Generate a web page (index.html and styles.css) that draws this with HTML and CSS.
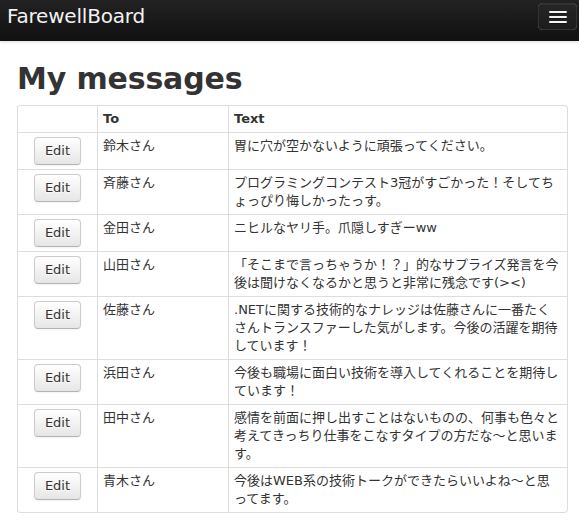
FILE: index.html
```html
<!DOCTYPE html>
<html lang="ja">
<head>
    <meta charset="UTF-8">
    <meta name="viewport" content="width=device-width, initial-scale=1.0">
    <title>FarewellBoard</title>
    <link rel="stylesheet" href="styles.css">
</head>
<body>

<div class="navbar">
    <a class="brand" href="#">FarewellBoard</a>
    <button class="btn-navbar" type="button">
        <span class="icon-bar"></span>
        <span class="icon-bar"></span>
        <span class="icon-bar"></span>
    </button>
</div>

<div class="container">
    <h1>My messages</h1>

    <table class="messages">
        <colgroup>
            <col class="col-edit">
            <col class="col-to">
            <col class="col-text">
        </colgroup>
        <thead>
            <tr>
                <th></th>
                <th>To</th>
                <th>Text</th>
            </tr>
        </thead>
        <tbody>
            <tr>
                <td class="edit"><a class="btn" href="#">Edit</a></td>
                <td>鈴木さん</td>
                <td>胃に穴が空かないように頑張ってください。</td>
            </tr>
            <tr>
                <td class="edit"><a class="btn" href="#">Edit</a></td>
                <td>斉藤さん</td>
                <td>プログラミングコンテスト3冠がすごかった！そしてちょっぴり悔しかったっす。</td>
            </tr>
            <tr>
                <td class="edit"><a class="btn" href="#">Edit</a></td>
                <td>金田さん</td>
                <td>ニヒルなヤリ手。爪隠しすぎーww</td>
            </tr>
            <tr>
                <td class="edit"><a class="btn" href="#">Edit</a></td>
                <td>山田さん</td>
                <td>「そこまで言っちゃうか！？」的なサプライズ発言を今後は聞けなくなるかと思うと非常に残念です(&gt;&lt;)</td>
            </tr>
            <tr>
                <td class="edit"><a class="btn" href="#">Edit</a></td>
                <td>佐藤さん</td>
                <td>.NETに関する技術的なナレッジは佐藤さんに一番たくさんトランスファーした気がします。今後の活躍を期待しています！</td>
            </tr>
            <tr>
                <td class="edit"><a class="btn" href="#">Edit</a></td>
                <td>浜田さん</td>
                <td>今後も職場に面白い技術を導入してくれることを期待しています！</td>
            </tr>
            <tr>
                <td class="edit"><a class="btn" href="#">Edit</a></td>
                <td>田中さん</td>
                <td>感情を前面に押し出すことはないものの、何事も色々と考えてきっちり仕事をこなすタイプの方だな〜と思います。</td>
            </tr>
            <tr>
                <td class="edit"><a class="btn" href="#">Edit</a></td>
                <td>青木さん</td>
                <td>今後はWEB系の技術トークができたらいいよね〜と思ってます。</td>
            </tr>
        </tbody>
    </table>
</div>

</body>
</html>
```

FILE: styles.css
```css
/* base */
body {
    margin: 0;
    padding: 0;
    font-family: "DejaVu Sans", "Noto Sans CJK JP", sans-serif;
    font-size: 13px;
    line-height: 18px;
    color: #333;
    background-color: #fff;
}

/* top bar */
.navbar {
    display: flex;
    align-items: flex-start;
    justify-content: space-between;
    height: 41px;
    padding: 0 2px 0 7px;
    background-image: linear-gradient(to bottom, #222, #111);
    box-shadow: 0 1px 3px rgba(0, 0, 0, 0.15);
}
.brand {
    color: #f2f2f2;
    text-decoration: none;
    font-size: 20px;
    line-height: 20px;
    padding-top: 6px;
    letter-spacing: -0.2px;
}
.btn-navbar {
    margin-top: 3px;
    width: 39px;
    height: 27px;
    padding: 0 10px;
    display: flex;
    flex-direction: column;
    justify-content: center;
    gap: 3px;
    background-image: linear-gradient(to bottom, #262626, #1c1c1c);
    border: 1px solid #333;
    border-radius: 4px;
    box-shadow: inset 0 1px 0 rgba(255, 255, 255, 0.05);
}
.icon-bar {
    display: block;
    width: 18px;
    height: 2px;
    background-color: #f5f5f5;
    border-radius: 1px;
    box-shadow: 0 1px 0 rgba(0, 0, 0, 0.25);
}

/* content */
.container {
    padding: 0 12px 0 17px;
}
h1 {
    margin: 20px 0 8px;
    font-size: 30px;
    line-height: 36px;
    font-weight: bold;
    color: #333;
    letter-spacing: -0.15px;
}

/* table */
.messages {
    width: 550px;
    table-layout: fixed;
    border-collapse: separate;
    border-spacing: 0;
    border: 1px solid #ddd;
    border-left: 0;
    border-radius: 4px;
}
.col-edit { width: 80px; }
.col-to { width: 131px; }
.col-text { width: 339px; }
.messages th,
.messages td {
    padding: 4px 5px;
    text-align: left;
    vertical-align: top;
    border-left: 1px solid #ddd;
    border-top: 1px solid #ddd;
    word-break: break-all;
}
.messages thead th {
    border-top: 0;
    font-weight: bold;
}
.messages td.edit {
    text-align: center;
}

.btn {
    display: inline-block;
    padding: 4px 10px;
    font-size: 13px;
    line-height: 18px;
    color: #333;
    text-decoration: none;
    text-shadow: 0 1px 1px rgba(255, 255, 255, 0.75);
    background-image: linear-gradient(to bottom, #fff, #e6e6e6);
    border: 1px solid #ccc;
    border-bottom-color: #b3b3b3;
    border-radius: 4px;
    box-shadow: inset 0 1px 0 rgba(255, 255, 255, 0.2), 0 1px 2px rgba(0, 0, 0, 0.05);
}
```
